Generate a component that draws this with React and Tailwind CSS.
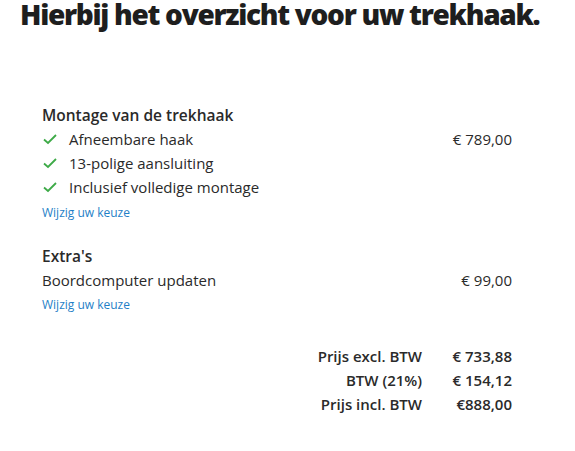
import React from "react";

const Check = () => (
  <svg width="16" height="16" viewBox="0 0 16 16" className="shrink-0">
    <path d="M2 8.5 L6 12 L14 4" fill="none" stroke="#3daa47" strokeWidth="1.8" />
  </svg>
);

const items = ["Afneembare haak", "13-polige aansluiting", "Inclusief volledige montage"];

const totals = [
  ["Prijs excl. BTW", "€ 733,88"],
  ["BTW (21%)", "€ 154,12"],
  ["Prijs incl. BTW", "€888,00"],
];

const App = () => {
  return (
    <div className="w-[575px] h-[451px] bg-white text-[#2a2a2a] font-['Open_Sans',sans-serif] overflow-hidden">
      {/* Title */}
      <h1 className="pl-[20px] pt-0 text-[28px] leading-[28px] font-extrabold tracking-[-1.3px] text-[#1e1e1e] whitespace-nowrap">
        Hierbij het overzicht voor uw trekhaak.
      </h1>

      <div className="pl-[42px] w-[512px] pt-[75px] text-[15px] leading-[24px]">
        {/* Montage */}
        <div className="font-semibold text-[15.5px]">Montage van de trekhaak</div>
        <div className="flex justify-between">
          <div>
            {items.map((it) => (
              <div key={it} className="flex items-center gap-[11px]">
                <Check />
                <span>{it}</span>
              </div>
            ))}
          </div>
          <div>€ 789,00</div>
        </div>
        <a className="block text-[12px] leading-[28px] text-[#1f7fc7]">Wijzig uw keuze</a>

        {/* Extra's */}
        <div className="mt-[17px] font-semibold text-[15.5px]">Extra's</div>
        <div className="flex justify-between">
          <span>Boordcomputer updaten</span>
          <span>€ 99,00</span>
        </div>
        <a className="block text-[12px] leading-[26px] text-[#1f7fc7]">Wijzig uw keuze</a>

        {/* Totals */}
        <div className="mt-[26px] flex justify-end font-semibold">
          <div className="grid grid-cols-[auto_90px] text-right">
            {totals.map(([l, v]) => (
              <React.Fragment key={l}>
                <span>{l}</span>
                <span>{v}</span>
              </React.Fragment>
            ))}
          </div>
        </div>
      </div>
    </div>
  );
};

export default App;
